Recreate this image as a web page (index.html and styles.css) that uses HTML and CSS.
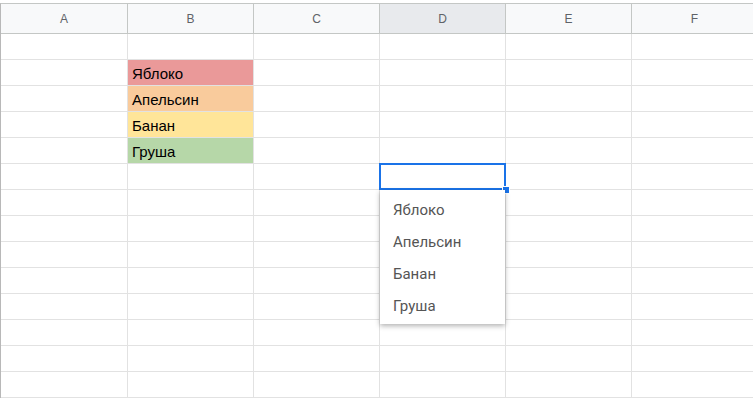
FILE: index.html
```html
<!DOCTYPE html>
<html>
<head>
    <title>Таблица</title>
    <link rel="stylesheet" href="styles.css">
</head>
<body>
    <div class="sheet">
        <div class="row head">
            <div class="col first">A</div>
            <div class="col">B</div>
            <div class="col">C</div>
            <div class="col active">D</div>
            <div class="col">E</div>
            <div class="col">F</div>
        </div>

        <div class="row"><div class="cell first"></div><div class="cell"></div><div class="cell"></div><div class="cell"></div><div class="cell"></div><div class="cell"></div></div>
        <div class="row"><div class="cell first"></div><div class="cell red">Яблоко</div><div class="cell"></div><div class="cell"></div><div class="cell"></div><div class="cell"></div></div>
        <div class="row"><div class="cell first"></div><div class="cell orange">Апельсин</div><div class="cell"></div><div class="cell"></div><div class="cell"></div><div class="cell"></div></div>
        <div class="row"><div class="cell first"></div><div class="cell yellow">Банан</div><div class="cell"></div><div class="cell"></div><div class="cell"></div><div class="cell"></div></div>
        <div class="row"><div class="cell first"></div><div class="cell green">Груша</div><div class="cell"></div><div class="cell"></div><div class="cell"></div><div class="cell"></div></div>
        <div class="row">
            <div class="cell first"></div><div class="cell"></div><div class="cell"></div>
            <div class="cell selected">
                <div class="outline"><span class="handle"></span></div>
                <ul class="dropdown">
                    <li>Яблоко</li>
                    <li>Апельсин</li>
                    <li>Банан</li>
                    <li>Груша</li>
                </ul>
            </div>
            <div class="cell"></div><div class="cell"></div>
        </div>
        <div class="row"><div class="cell first"></div><div class="cell"></div><div class="cell"></div><div class="cell"></div><div class="cell"></div><div class="cell"></div></div>
        <div class="row"><div class="cell first"></div><div class="cell"></div><div class="cell"></div><div class="cell"></div><div class="cell"></div><div class="cell"></div></div>
        <div class="row"><div class="cell first"></div><div class="cell"></div><div class="cell"></div><div class="cell"></div><div class="cell"></div><div class="cell"></div></div>
        <div class="row"><div class="cell first"></div><div class="cell"></div><div class="cell"></div><div class="cell"></div><div class="cell"></div><div class="cell"></div></div>
        <div class="row"><div class="cell first"></div><div class="cell"></div><div class="cell"></div><div class="cell"></div><div class="cell"></div><div class="cell"></div></div>
        <div class="row"><div class="cell first"></div><div class="cell"></div><div class="cell"></div><div class="cell"></div><div class="cell"></div><div class="cell"></div></div>
        <div class="row"><div class="cell first"></div><div class="cell"></div><div class="cell"></div><div class="cell"></div><div class="cell"></div><div class="cell"></div></div>
        <div class="row"><div class="cell first"></div><div class="cell"></div><div class="cell"></div><div class="cell"></div><div class="cell"></div><div class="cell"></div></div>
    </div>
</body>
</html>
```

FILE: styles.css
```css
html,
body {
    margin: 0;
    height: 100%;
    overflow: hidden;
    background-color: #fff;
    font-family: "Liberation Sans", Arial, sans-serif;
}

.sheet {
    margin-top: 3px;
    border-top: 1px solid #c4c7c5;
    border-left: 1px solid #b8b8b8;
}

.row {
    display: flex;
    height: 26px;
}

.row.head {
    height: 30px;
}

.col,
.cell {
    box-sizing: border-box;
    flex: 0 0 126px;
    border-right: 1px solid #e2e2e2;
    border-bottom: 1px solid #e2e2e2;
}

.col.first,
.cell.first {
    flex-basis: 127px;
}

/* last column runs off the window edge */
.col:last-child,
.cell:last-child {
    flex: 1 1 0;
    border-right: none;
}

.col {
    display: flex;
    align-items: center;
    justify-content: center;
    background-color: #f8f9fa;
    border-right-color: #c4c7c5;
    border-bottom-color: #c4c7c5;
    color: #5f6368;
    font-size: 12px;
}

.col:last-child {
    padding-left: 4px;
}

.col.active {
    background-color: #e8eaed;
}

.cell {
    display: flex;
    align-items: flex-end;
    padding: 0 4px 3px;
    font-size: 15px;
    color: #000;
}

.red { background-color: #ea9999; }
.orange { background-color: #f9cb9c; }
.yellow { background-color: #ffe599; }
.green { background-color: #b6d7a8; }

.selected {
    position: relative;
}

.outline {
    position: absolute;
    left: -1px;
    top: -1px;
    width: 127px;
    height: 27px;
    box-sizing: border-box;
    border: 2px solid #1a73e8;
}

.handle {
    position: absolute;
    right: -6px;
    bottom: -6px;
    width: 6px;
    height: 6px;
    background-color: #1a73e8;
    border: 1px solid #fff;
}

.dropdown {
    position: absolute;
    left: 0;
    top: 26px;
    width: 125px;
    margin: 0;
    padding: 4px 0 2px;
    list-style: none;
    background-color: #fff;
    box-shadow: 0 2px 5px rgba(0, 0, 0, 0.3);
    z-index: 2;
}

.dropdown li {
    height: 32px;
    line-height: 32px;
    padding-left: 13px;
    font-family: Roboto, "Liberation Sans", sans-serif;
    font-size: 15px;
    color: #555;
}
```
